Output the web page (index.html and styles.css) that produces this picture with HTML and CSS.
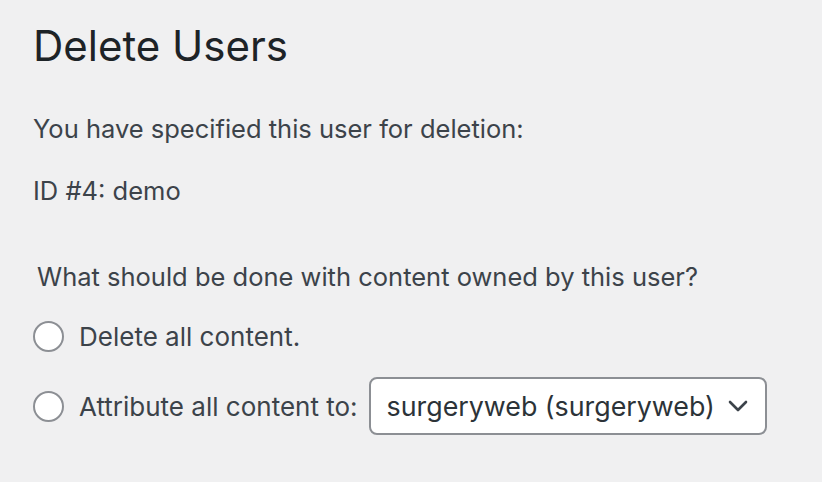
FILE: index.html
```html
<!DOCTYPE html>
<html lang="en">
<head>
<meta charset="utf-8">
<title>Delete Users</title>
<link rel="stylesheet" href="styles.css">
</head>
<body>
<div class="wrap">
  <h1 class="title">Delete Users</h1>
  <p class="intro">You have specified this user for deletion:</p>
  <ul class="users"><li>ID #4: demo</li></ul>
  <fieldset class="options">
    <legend class="legend">What should be done with content owned by this user?</legend>
    <div class="option">
      <span class="radio"></span>
      <span class="label">Delete all content.</span>
    </div>
    <div class="option option-select">
      <span class="radio"></span>
      <span class="label">Attribute all content to:</span>
      <div class="select">
        <span class="select-text">surgeryweb (surgeryweb)</span>
        <svg class="chevron" width="20" height="12" viewBox="0 0 20 12"><path d="M2 2 L10 10 L18 2" fill="none" stroke="#3c434a" stroke-width="2.6" stroke-linecap="round" stroke-linejoin="round"/></svg>
      </div>
    </div>
  </fieldset>
</div>
</body>
</html>
```
FILE: styles.css
```css
html, body {
  margin: 0;
  padding: 0;
  background: #f0f0f1;
}
body {
  font-family: Inter, "Noto Sans", sans-serif;
  color: #3c434a;
  font-size: 25.5px;
}
.wrap {
  padding: 0 0 0 33px;
}
.title {
  margin: 0;
  padding-top: 18px;
  font-size: 42px;
  font-weight: 400;
  line-height: 56px;
  color: #1d2327;
}
.intro {
  margin: 38px 0 0;
  line-height: 34px;
}
.users {
  list-style: none;
  margin: 28px 0 0;
  padding: 0;
  line-height: 34px;
}
.options {
  border: 0;
  margin: 52px 0 0;
  padding: 0;
}
.legend {
  padding: 0 0 0 4px;
  line-height: 34px;
}
.option {
  display: flex;
  align-items: center;
  margin-top: 25px;
  min-height: 34px;
}
.option-select {
  margin-top: 24px;
}
.radio {
  width: 27px;
  height: 27px;
  border: 2px solid #8c8f94;
  border-radius: 50%;
  background: #fff;
  flex: none;
}
.label {
  margin-left: 15px;
  font-size: 26px;
}
.select {
  margin-left: 11px;
  display: flex;
  align-items: center;
  width: 398px;
  height: 58px;
  border: 2px solid #8c8f94;
  border-radius: 8px;
  background: #fff;
  color: #2c3338;
  font-size: 26.8px;
  padding: 0 17px 0 16px;
  box-sizing: border-box;
  justify-content: space-between;
  flex: none;
}
.chevron {
  flex: none;
}
```
